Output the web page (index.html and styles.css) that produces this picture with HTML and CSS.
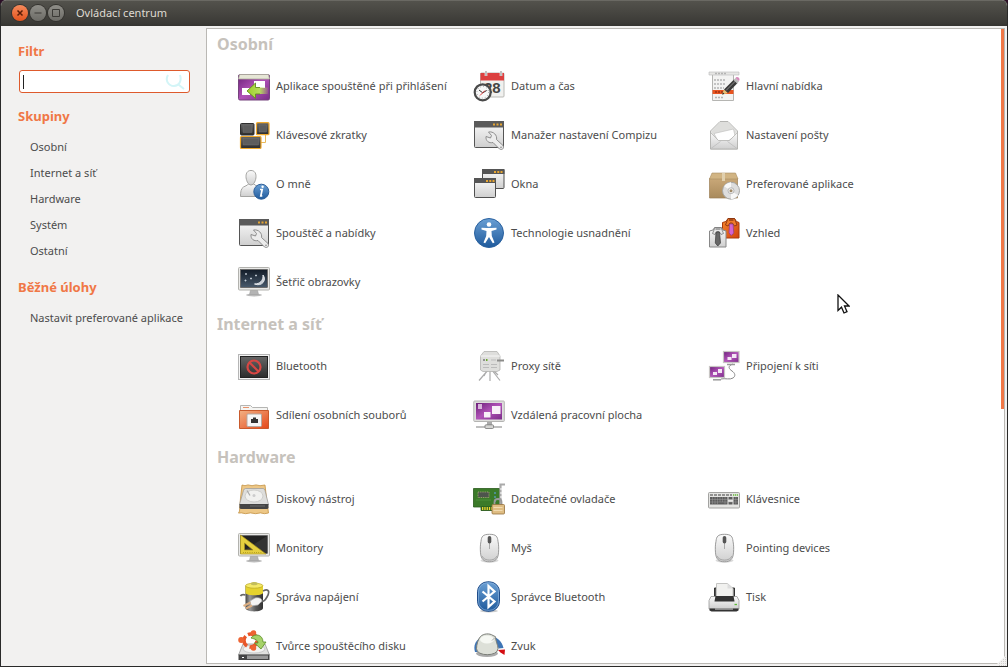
FILE: index.html
```html
<!DOCTYPE html>
<html lang="cs">
<head>
<meta charset="utf-8">
<meta name="viewport" content="width=device-width, initial-scale=1">
<title>Ovládací centrum</title>
<link rel="stylesheet" href="styles.css">
</head>
<body>
<svg class="defs" width="0" height="0" aria-hidden="true">
  <defs>
    <linearGradient id="purple" x1="0" y1="0" x2="1" y2="1"><stop offset="0" stop-color="#6b1f78"/><stop offset=".5" stop-color="#b153b8"/><stop offset="1" stop-color="#7a2c88"/></linearGradient>
    <linearGradient id="silver" x1="0" y1="0" x2="0" y2="1"><stop offset="0" stop-color="#fafafa"/><stop offset="1" stop-color="#cfcfcf"/></linearGradient>
    <linearGradient id="dark" x1="0" y1="0" x2="0" y2="1"><stop offset="0" stop-color="#666"/><stop offset="1" stop-color="#2c2c2c"/></linearGradient>
    <linearGradient id="blue" x1="0" y1="0" x2="0" y2="1"><stop offset="0" stop-color="#6a9fd4"/><stop offset="1" stop-color="#1f5a9c"/></linearGradient>
    <linearGradient id="orange" x1="0" y1="0" x2="1" y2="1"><stop offset="0" stop-color="#f2b184"/><stop offset="1" stop-color="#e5481a"/></linearGradient>
    <linearGradient id="shirt" x1="0" y1="0" x2="1" y2="1"><stop offset="0" stop-color="#f58a2e"/><stop offset="1" stop-color="#d2400e"/></linearGradient>
    <linearGradient id="green" x1="0" y1="0" x2="1" y2="0"><stop offset="0" stop-color="#9fce2c"/><stop offset=".6" stop-color="#b6dc5a"/><stop offset="1" stop-color="#b6dc5a" stop-opacity=".15"/></linearGradient>
    <linearGradient id="night" x1="0" y1="0" x2="0" y2="1"><stop offset="0" stop-color="#131d29"/><stop offset="1" stop-color="#47586a"/></linearGradient>
    <linearGradient id="tan" x1="0" y1="0" x2="0" y2="1"><stop offset="0" stop-color="#c9a878"/><stop offset="1" stop-color="#a98a5c"/></linearGradient>
    <linearGradient id="battery" x1="0" y1="0" x2="1" y2="0"><stop offset="0" stop-color="#444"/><stop offset=".25" stop-color="#999"/><stop offset=".6" stop-color="#555"/><stop offset="1" stop-color="#333"/></linearGradient>
  </defs>
  <symbol id="tool-window" viewBox="0 0 32 32">
    <rect x="1.500" y="2.500" width="29" height="26" rx="1" fill="url(#silver)" stroke="#555"/>
    <path d="M1 2h30v6.500H1z" fill="#5a5a5a"/>
    <path d="M20 4.500h2v2h-2zM23.500 4.500h2v2h-2zM27 4.500h2v2h-2z" fill="#e6a532"/>
    <path d="M15.500 13l3 3.500-1 2.500-4.500-1.500c-.500 4.500 3 7 7 6l6.500 6.500c2.500 1.500 5-.500 3.500-3.500l-6.500-6c1-4-3-8.500-8-7.500z" fill="#ececec" stroke="#858585" stroke-width=".9"/>
    <circle cx="28" cy="28.300" r=".9" fill="#999"/>
  </symbol>
  <symbol id="monitor" viewBox="0 0 32 32">
    <ellipse cx="16" cy="29" rx="8" ry="1.500" fill="#bbb"/>
    <path d="M12.500 24h7l1 4.500h-9z" fill="#b4b4b4" stroke="#999" stroke-width=".5"/>
    <rect x=".5" y="1.500" width="31" height="22.500" rx="1" fill="#e9e9e7" stroke="#b2b2ae"/>
    <rect x="2.500" y="3.500" width="27" height="18" fill="#222" stroke="#555" stroke-width=".5"/>
  </symbol>
  <symbol id="mouse" viewBox="0 0 32 32">
    <ellipse cx="16.500" cy="28.500" rx="9" ry="2" fill="#d9d9d9"/>
    <path d="M16.500 2.300c7 0 8 2.500 8.500 7 .8 4 .8 7 .5 11.500-.5 6-3 9-9 9s-8.500-3-9-9c-.3-4.500-.3-7.500.5-11.500.5-4.500 1.500-7 8.500-7z" fill="url(#silver)" stroke="#9b9b9b"/>
    <path d="M9 24c2 5.500 13 5.500 15 0" fill="none" stroke="#999" stroke-width=".8"/>
    <path d="M16.500 11v6" stroke="#aaa"/>
    <rect x="14.700" y="4" width="3.600" height="7.500" rx="1.800" fill="#555"/>
  </symbol>
</svg>

<div class="window">
  <header class="titlebar">
    <div class="controls">
      <button class="control control-close" type="button" aria-label="Zavřít"><svg viewBox="0 0 16 16"><path d="M5.500 5.500l5 5M10.500 5.500l-5 5"/></svg></button>
      <button class="control" type="button" aria-label="Minimalizovat"><svg viewBox="0 0 16 16"><path d="M4.500 8h7"/></svg></button>
      <button class="control" type="button" aria-label="Maximalizovat"><svg viewBox="0 0 16 16"><path d="M4.500 4.500h7v7h-7z"/></svg></button>
    </div>
    <h1 class="title">Ovládací centrum</h1>
  </header>

  <div class="body">
    <aside class="sidebar">
      <section class="side-section">
        <h2 class="side-heading"><label for="filter">Filtr</label></h2>
        <div class="search">
          <span class="caret"></span>
          <input class="search-input" id="filter" type="text" autocomplete="off">
          <svg class="search-icon" viewBox="0 0 20 16" aria-hidden="true"><path d="M3 1C0 6 3 12 9 12c5 0 8-5 6-11M14 11l5 4" fill="none" stroke="#d3f5f7" stroke-width="2"/></svg>
        </div>
      </section>
      <nav class="side-section">
        <h2 class="side-heading">Skupiny</h2>
        <ul class="side-list">
          <li><a href="#personal">Osobní</a></li>
          <li><a href="#internet">Internet a síť</a></li>
          <li><a href="#hardware">Hardware</a></li>
          <li><a href="#system">Systém</a></li>
          <li><a href="#other">Ostatní</a></li>
        </ul>
      </nav>
      <nav class="side-section">
        <h2 class="side-heading">Běžné úlohy</h2>
        <ul class="side-list">
          <li><a href="#preferred">Nastavit preferované aplikace</a></li>
        </ul>
      </nav>
    </aside>

    <main class="panel">
      <div class="content">
        <section class="group" id="personal">
          <h2 class="group-heading">Osobní</h2>
          <ul class="items">
            <li><a class="item" href="#startup"><svg class="icon" viewBox="0 0 32 32">
              <rect x=".5" y="4.500" width="31" height="25.500" rx="1.500" fill="url(#purple)" stroke="#75437d"/>
              <path d="M1.500 4.500h29l1 4.500H.500z" fill="#e6e6d6" stroke="#aaa89a" stroke-width=".8"/>
              <path d="M16 11h11v7H16zM4 18h8v7H4z" fill="#fff"/>
              <path d="M9 21l8.500-8v4.500H30v6.500H17.500v4.500z" fill="url(#green)"/><path d="M22 17.500h-4.500V13L9 21l8.500 7.500V24H22" fill="none" stroke="#628a1c" stroke-width=".9"/>
            </svg><span>Aplikace spouštěné při přihlášení</span></a></li>
            <li><a class="item" href="#datetime"><svg class="icon" viewBox="0 0 32 32">
              <rect x="7.500" y="3" width="23.500" height="24" rx="1" fill="#f1f1ef" stroke="#b9b9b5"/>
              <path d="M7.500 3h23.500v7.500H7.500z" fill="#dc4040"/>
              <path d="M13 1v5M28 1v5" stroke="#fff" stroke-width="2.600"/><path d="M13 1v5M28 1v5" stroke="#999" stroke-width="1.200"/>
              <text x="11" y="23" class="icon-date">28</text>
              <circle cx="9.700" cy="22.300" r="8" fill="#f8f8f8" stroke="#4a4a4a" stroke-width="2.200"/>
              <circle cx="9.700" cy="22.300" r="5.800" fill="none" stroke="#777" stroke-width="1" stroke-dasharray=".6 2.440"/>
              <path d="M6 20l3.700 2.800 4-2.300" fill="none" stroke="#333" stroke-width="1"/><path d="M7 25.500l5-5" stroke="#d22" stroke-width=".9"/>
            </svg><span>Datum a čas</span></a></li>
            <li><a class="item" href="#menu"><svg class="icon" viewBox="0 0 32 32">
              <path d="M4.500 4h21v26.500h-21z" fill="#f3f3f2" stroke="#b5b5b2"/>
              <path d="M1 2h30v3H1z" fill="#e6e6e4" stroke="#bbb" stroke-width=".6"/>
              <path d="M7 3.500h11M6 10h12M6 14h12M6 18h10M7 27.500h9" stroke="#b4b4b4" stroke-width="1.500" stroke-dasharray="2 1"/>
              <path d="M4.500 20h21v4h-21z" fill="#e95420"/><path d="M7 22h9" stroke="#9b3213" stroke-width="1.500" stroke-dasharray="2 1"/>
              <path d="M14 24.500l2-5 4 3.500z" fill="#e5c478"/><path d="M14 24.500l1-2 1.500 1.400z" fill="#222"/>
              <path d="M16 19.500L26 9.500l3.500 3.500L20 23z" fill="#3a3a3a"/><path d="M18 20.500l9.500-9.500" stroke="#8a8a8a"/>
              <path d="M25.500 10l2-2 3.500 3.500-2 2z" fill="#bbb"/><path d="M27.500 8c1-2 4.500-.5 4 2.200L30.500 11z" fill="#d58aba"/>
            </svg><span>Hlavní nabídka</span></a></li>
            <li><a class="item" href="#shortcuts"><svg class="icon" viewBox="0 0 32 32">
              <rect x="2.500" y="4.500" width="13.500" height="11.500" rx="1" fill="url(#dark)" stroke="#2f2f2f"/><rect x="5" y="6" width="9" height="7.500" fill="#5d5d5d" stroke="#777" stroke-width=".4"/>
              <path d="M27.500 16v7.500H23" fill="none" stroke="#e8b95c" stroke-width="1"/>
              <rect x="18.500" y="3.700" width="12.500" height="12" rx="1" fill="url(#dark)" stroke="#f0a92c" stroke-width="1.200"/><rect x="21" y="6" width="7.500" height="7" fill="#5d5d5d" stroke="#777" stroke-width=".4"/>
              <rect x="2.500" y="17.500" width="20.500" height="12" rx="1" fill="url(#dark)" stroke="#f0a92c" stroke-width="1.200"/><rect x="5" y="19.500" width="15.500" height="6.500" fill="#5d5d5d" stroke="#777" stroke-width=".4"/>
            </svg><span>Klávesové zkratky</span></a></li>
            <li><a class="item" href="#compiz"><svg class="icon"><use href="#tool-window"/></svg><span>Manažer nastavení Compizu</span></a></li>
            <li><a class="item" href="#mail"><svg class="icon" viewBox="0 0 32 32">
              <path d="M2.500 12L12 2.500h8L29.500 12v18h-27z" fill="#ececea" stroke="#b4b4b2"/>
              <path d="M3 13L12 3h8l9 10-7 8H10z" fill="#dededc"/>
              <path d="M6 14.500L25.500 10l1.500 7-7 5H10z" fill="#fff" stroke="#c2c2c0" stroke-width=".7"/>
              <path d="M2.500 13.500l8 8h11l8-8V30h-27z" fill="url(#silver)" stroke="#adadab" stroke-width=".7"/>
              <path d="M3 29.500l9.500-7M29 29.500l-9.500-7" stroke="#bbb" stroke-width=".8"/>
            </svg><span>Nastavení pošty</span></a></li>
            <li><a class="item" href="#about"><svg class="icon" viewBox="0 0 32 32">
              <path d="M10.500 16l-1 1-4 2C3 20.500 2.500 24 2.500 28.500h18V19l-3.500-2-1-1z" fill="url(#silver)" stroke="#a4a4a2"/>
              <path d="M13 2.500c3.500 0 5 2.500 5 6s-2 8.500-5 8.500-5-5-5-8.500 1.500-6 5-6z" fill="url(#silver)" stroke="#a4a4a2"/>
              <circle cx="23.300" cy="23.700" r="7.500" fill="url(#blue)" stroke="#2d5f99"/>
              <path d="M22 21.500h2.200l-1.400 6.500h1.500" fill="none" stroke="#fff" stroke-width="1.700"/><circle cx="24.600" cy="18.700" r="1.200" fill="#fff"/>
            </svg><span>O mně</span></a></li>
            <li><a class="item" href="#windows"><svg class="icon" viewBox="0 0 32 32">
              <rect x="9.500" y="1.500" width="21.500" height="19" rx="1" fill="url(#silver)" stroke="#4f4f4f"/><path d="M9 1h22.500v5H9z" fill="#555"/><path d="M21 3h2v2h-2zM24.300 3h2v2h-2zM27.500 3h2v2h-2z" fill="#e6a532"/>
              <rect x="1.500" y="10.500" width="21" height="19" rx="1" fill="url(#silver)" stroke="#4f4f4f"/><path d="M1 10h22v5H1z" fill="#555"/><path d="M13 12h2v2h-2zM16.300 12h2v2h-2zM19.500 12h2v2h-2z" fill="#e6a532"/>
            </svg><span>Okna</span></a></li>
            <li><a class="item" href="#preferred"><svg class="icon" viewBox="0 0 32 32">
              <path d="M1.500 10.500h28v19.500h-28z" fill="url(#tan)" stroke="#9c8058" stroke-width=".7"/>
              <path d="M4 5h23.500l2.500 6H1.500z" fill="#d1b483" stroke="#a88d61" stroke-width=".6"/>
              <path d="M14 5h3v8h-3z" fill="#e0cfad"/>
              <circle cx="23" cy="22.700" r="8.500" fill="#ddd" stroke="#a6a6a4"/><path d="M23 22.700l-7-4.500c2-3 6-4 7-4zM23 22.700l7 4.500c-2 3-6 4-7 4z" fill="#f8f8f8"/>
              <circle cx="23" cy="22.700" r="3" fill="#eee" stroke="#999" stroke-width=".6"/><circle cx="23" cy="22.700" r="1.500" fill="#a08a68"/>
            </svg><span>Preferované aplikace</span></a></li>
            <li><a class="item" href="#panel"><svg class="icon"><use href="#tool-window"/></svg><span>Spouštěč a nabídky</span></a></li>
            <li><a class="item" href="#access"><svg class="icon" viewBox="0 0 32 32">
              <circle cx="16" cy="16" r="14.500" fill="url(#blue)" stroke="#2a619f"/>
              <circle cx="16" cy="7.500" r="2.300" fill="#fff"/>
              <path d="M8.500 10.800l5.500.2h4l5.500-.2v1.700l-5 1.600.3 5 2.700 6.500-1.700.7L16 20l-3.800 6.300-1.700-.7 2.700-6.500.3-5-5-1.600z" fill="#fff"/>
            </svg><span>Technologie usnadnění</span></a></li>
            <li><a class="item" href="#appearance"><svg class="icon" viewBox="0 0 32 32">
              <path d="M14.500 5.500l3.500-1 2-3h6.500l2 3 2.500 1v15.500H14.500z" fill="url(#shirt)" stroke="#a83a0d"/><path d="M17.500 8l2.500-6.500h6.500L29 8l-2.500 1-2.200-3h-2.300l-2 3z" fill="#ef7a2a" stroke="#7e2e0d" stroke-width=".8"/><path d="M21 3h4.500" stroke="#7e2e0d" stroke-width="1.200"/>
              <path d="M21.500 7h3.500l.8 9-2.500 2.500L21 16z" fill="#d463cf" stroke="#8c3c8c" stroke-width=".7"/>
              <path d="M1.500 14l3.500-1 1.500-2.500h7l1.500 2.500 3 1v16H1.500z" fill="url(#silver)" stroke="#888"/><path d="M4.500 16.500L7 10.500h6l2.500 6-2.500 1-2-3H9l-2 3z" fill="#e6e6e6" stroke="#777" stroke-width=".8"/><path d="M7.500 12h5" stroke="#666"/>
              <path d="M8 15h3.500l1 11-2.700 3-2.500-3z" fill="#666" stroke="#3a3a3a" stroke-width=".7"/>
            </svg><span>Vzhled</span></a></li>
            <li><a class="item" href="#screensaver"><svg class="icon" viewBox="0 0 32 32">
              <use href="#monitor"/><rect x="3" y="4" width="26" height="17" fill="url(#night)"/>
              <path d="M25 9c4 5-1 12-8.500 9 5.500 0 9-3.500 8.500-9z" fill="#c9cfd6" stroke="#dfe3e8"/>
              <path d="M8 7v2M7 8h2M18 8.500v2M17 9.500h2M13 11.500v2M12 12.500h2M7.500 13.500v2M6.500 14.500h2" stroke="#cdd5de" stroke-width=".8"/>
            </svg><span>Šetřič obrazovky</span></a></li>
          </ul>
        </section>

        <section class="group" id="internet">
          <h2 class="group-heading">Internet a síť</h2>
          <ul class="items">
            <li><a class="item" href="#bluetooth"><svg class="icon" viewBox="0 0 32 32">
              <rect x=".5" y="4.500" width="31" height="25" fill="#f4f4f4" stroke="#b5b5b5"/>
              <rect x="2.500" y="6.500" width="27" height="21" fill="url(#dark)" stroke="#222"/>
              <circle cx="16" cy="17" r="6.500" fill="none" stroke="#d84643" stroke-width="2.200"/><path d="M11.500 12.500l9 9" stroke="#d84643" stroke-width="2.200"/>
            </svg><span>Bluetooth</span></a></li>
            <li><a class="item" href="#proxy"><svg class="icon" viewBox="0 0 32 32">
              <path d="M16 19L6 30.500M17 19v12M18 19l9 11.500M14 20l-3 6M20 20l5 5" stroke="#aaa" stroke-width="1.200"/>
              <path d="M7.500 6L11 1.500h13L27 6v14l-3 1.500H10L7.500 20z" fill="#dededc" stroke="#b2b2b0" stroke-width=".8"/><path d="M7.500 6H27" stroke="#f7f7f7"/>
              <path d="M10 10h2" stroke="#777" stroke-width="1.500"/><path d="M13 10h1.500" stroke="#6aaa2c" stroke-width="2"/><path d="M18 10h5M10 14.500h6M18 14.500h6M10 17.500h6M18 17.500h6" stroke="#bbb" stroke-width="1"/>
              <path d="M24 10.500h7" stroke="#8c8c8a" stroke-width="2"/>
            </svg><span>Proxy sítě</span></a></li>
            <li><a class="item" href="#network"><svg class="icon" viewBox="0 0 32 32">
              <path d="M25 14c-6 2-4 5-1 7s4 5 1 7-8 0-12 1" fill="none" stroke="#888" stroke-width="1"/>
              <rect x="15.500" y="1.500" width="15.500" height="11" fill="url(#purple)" stroke="#c8c6c4" stroke-width="1.200"/><path d="M19.500 7h4v3h-4zM24 4h4.500v4H24z" fill="#f3e6f4"/><path d="M19 14.500h8" stroke="#999" stroke-width="1.500"/>
              <rect x="1.500" y="16.500" width="15" height="11" fill="url(#purple)" stroke="#c8c6c4" stroke-width="1.200"/><path d="M5 22h4v3H5zM10 19h4v4h-4z" fill="#f3e6f4"/><path d="M5 29.800h8" stroke="#999" stroke-width="1.500"/>
            </svg><span>Připojení k síti</span></a></li>
            <li><a class="item" href="#sharing"><svg class="icon" viewBox="0 0 32 32">
              <path d="M2.500 12V6.500h10l2 2h15v5z" fill="#f5f5f3" stroke="#b5b5b3"/><path d="M5 8.500h6" stroke="#e7936c"/>
              <path d="M1.500 11.500h29v18h-29z" fill="url(#orange)" stroke="#c95a2c"/>
              <rect x="9" y="15" width="14.500" height="12.500" rx="1" fill="#f6f6f6" stroke="#b5a9a2"/>
              <path d="M13 24v-4h2v-1.500h3V20h2v4z" fill="#333"/>
            </svg><span>Sdílení osobních souborů</span></a></li>
            <li><a class="item" href="#remote"><svg class="icon" viewBox="0 0 32 32">
              <path d="M3 28h26" stroke="#aaa" stroke-width="1.500"/><path d="M14 23h5v3h-5z" fill="#aaa"/><rect x="12" y="25.800" width="8.500" height="3.700" rx="1" fill="#d4d4d2" stroke="#777" stroke-width=".8"/>
              <rect x=".8" y="2" width="30.500" height="20.500" rx=".8" fill="#dededc" stroke="#b4b4b2"/><rect x="3" y="4" width="26" height="16.500" fill="url(#purple)"/>
              <path d="M5 5h4v5H5z" fill="#e5cbe8" fill-opacity=".85"/><path d="M19 7h8.500v8H19zM11 13h6.500v5.500H11z" fill="#f8f0f8"/>
            </svg><span>Vzdálená pracovní plocha</span></a></li>
          </ul>
        </section>

        <section class="group" id="hardware">
          <h2 class="group-heading">Hardware</h2>
          <ul class="items">
            <li><a class="item" href="#disks"><svg class="icon" viewBox="0 0 32 32">
              <path d="M4 2l3 .7 3-.8 4 .8 4-.8 4 .8 5-.7 1.500 13 2 15-4 .7-4-.8-5 .8-5-.8-5 .8-4-.8-3 .2 1-2 1-13z" fill="#edc786" stroke="#c49242" stroke-width=".8"/>
              <path d="M7.500 5.500h17.500q1.500 0 2 2l3.500 14H1.500l4-14q.5-2 2-2z" fill="#dededc" stroke="#999" stroke-width=".7"/><ellipse cx="16" cy="13" rx="9" ry="6" fill="#f1f1ef" stroke="#c6c6c4" stroke-width=".8"/><path d="M9 7.500l3 5" stroke="#aaa" stroke-width="1.200"/><circle cx="16" cy="12.500" r="1.500" fill="#ccc"/>
              <path d="M1.500 21h29v3.500q0 1.500-2 1.500h-25q-2 0-2-1.500z" fill="#444"/><path d="M12 23h15" stroke="#777" stroke-width=".8"/>
            </svg><span>Diskový nástroj</span></a></li>
            <li><a class="item" href="#drivers"><svg class="icon" viewBox="0 0 32 32">
              <path d="M.5 5.500h26V24H8v3.500h11V24H.5z" fill="#3b7a29" stroke="#2a5a1c" stroke-width=".8"/><path d="M8 24.500h11v3H8z" fill="#335f1e"/><path d="M9 25.500h10" stroke="#e8d732" stroke-width="3" stroke-dasharray="1.300 1"/>
              <rect x="5" y="9" width="11" height="5.500" fill="#4d544c" stroke="#a8a878" stroke-width=".9" stroke-dasharray="1 .8"/><path d="M22 9v11" stroke="#5b9fd2" stroke-width="1.200" stroke-dasharray="2 2"/><path d="M3 17h15" stroke="#4f8f3a" stroke-width="1"/>
              <path d="M27.500 22V1.500H32" fill="none" stroke="#aaa" stroke-width="2.200"/><path d="M28 5v13" stroke="#fff" stroke-dasharray="2 2"/>
              <path d="M21.500 22v-3c0-4 7-4 7 0v3" fill="none" stroke="#999" stroke-width="1.800"/><rect x="19" y="21.500" width="12.500" height="9.500" rx="1" fill="#dfbd83" stroke="#94713d" stroke-width=".8"/><path d="M20.500 24.500h9M20.500 27.500h9" stroke="#f4dfb5" stroke-width=".9"/>
            </svg><span>Dodatečné ovladače</span></a></li>
            <li><a class="item" href="#keyboard"><svg class="icon" viewBox="0 0 32 32">
              <rect x=".5" y="9.500" width="31" height="15.500" rx="1" fill="#e4e4e2" stroke="#a3a3a1"/>
              <path d="M2 12h22" stroke="#777" stroke-width="1.300" stroke-dasharray="3 1"/><path d="M25 12h5" stroke="#63bb37" stroke-width="1.300" stroke-dasharray="1.200 .7"/>
              <path d="M2 14h17.500v7.500H2zM20.500 14h4v2.500h-4zM20.500 19h4v2.500h-4zM25.500 14h4.500v7.500h-4.500z" fill="#5c5c5c"/><path d="M2 16.500h28M2 19h28M4.500 14v7.500M7 14v7.500M9.500 14v7.500M12 14v5M14.500 14v5M17 14v7.500M27.800 14v7.500" stroke="#aaa" stroke-width=".4"/>
            </svg><span>Klávesnice</span></a></li>
            <li><a class="item" href="#monitors"><svg class="icon" viewBox="0 0 32 32">
              <use href="#monitor"/><path d="M3 20.500L29 4v17z" fill="#333"/>
              <path d="M2.500 3v19H28zM6.500 11l8.500 7H6.500z" fill="#e6cf3f" fill-rule="evenodd" stroke="#a99420" stroke-width=".7"/><path d="M5 20.500h19" stroke="#a28e1c" stroke-width="1" stroke-dasharray=".7 1.500"/>
            </svg><span>Monitory</span></a></li>
            <li><a class="item" href="#mouse-settings"><svg class="icon"><use href="#mouse"/></svg><span>Myš</span></a></li>
            <li><a class="item" href="#pointing"><svg class="icon"><use href="#mouse"/></svg><span>Pointing devices</span></a></li>
            <li><a class="item" href="#power"><svg class="icon" viewBox="0 0 32 32">
              <path d="M7.500 5v22c0 4.500 17.500 4.500 17.500 0V5z" fill="url(#battery)"/>
              <path d="M7.500 4.500v7.500c1 3 16.500 3 17.500 0V4.500z" fill="#e5d22e"/><ellipse cx="16.200" cy="4.700" rx="8.700" ry="2.500" fill="#f4e968" stroke="#b8a51d" stroke-width=".7"/><path d="M13 3.500V2c1-1.300 5.500-1.300 6.500 0v1.500c-1 1-5.500 1-6.500 0z" fill="#c3bd5a"/>
              <path d="M2.500 15c1-2 3-1.500 5-1M25 10c6-3 7 1 4 6-2 3.500-3 4.500-7 5" fill="none" stroke="#666" stroke-width="1.700"/>
              <path d="M12 20l5-3c3-1 7 0 7 3l-4 4-7 1z" fill="#f3f3f3" stroke="#aaa" stroke-width=".7"/><path d="M12.500 21.500l-7 3.500M14 24.500l-6 3" stroke="#dcae82" stroke-width="2"/>
            </svg><span>Správa napájení</span></a></li>
            <li><a class="item" href="#bt-manager"><svg class="icon" viewBox="0 0 32 32">
              <ellipse cx="16" cy="30" rx="9" ry="1.500" fill="#ccc"/><rect x="4.500" y=".8" width="22" height="29.500" rx="10" fill="url(#blue)" stroke="#204d8a"/><rect x="5.500" y="1.800" width="20" height="27.500" rx="9" fill="none" stroke="#8ab1dc" stroke-width=".7"/>
              <path d="M9.500 10.500l12 10L15.500 26V5l6 5.500-12 10" fill="none" stroke="#fff" stroke-width="2.200"/>
            </svg><span>Správce Bluetooth</span></a></li>
            <li><a class="item" href="#print"><svg class="icon" viewBox="0 0 32 32">
              <path d="M6.500 16V7h20v9z" fill="#555" stroke="#333"/><path d="M8.500 17V2.500h11l5.500 5V17z" fill="#f1f1ef" stroke="#c4c4c2"/><path d="M19.500 2.500v5H25" fill="#ddd"/>
              <path d="M3 15.500h26l2 4V28H1v-8.500z" fill="url(#silver)" stroke="#999" stroke-width=".8"/><path d="M7.500 15h18l1 5.500h-20z" fill="#333"/>
              <path d="M1.500 27.500h29v2l-2 1h-25l-2-1z" fill="#333"/><path d="M7 28h18" stroke="#aaa" stroke-width="1.500"/><path d="M26.500 23.500h2.500" stroke="#5ebb3a" stroke-width="1.300"/>
            </svg><span>Tisk</span></a></li>
            <li><a class="item" href="#usb-creator"><svg class="icon" viewBox="0 0 32 32">
              <path d="M5 14h22l4.500 11H.500z" fill="#e1e1df" stroke="#999" stroke-width=".8"/><ellipse cx="16" cy="19" rx="11" ry="4" fill="#f3f3f1" stroke="#bbb" stroke-width=".7"/>
              <path d="M.5 24.500h31V30H.500z" fill="#444"/><path d="M9 25.500h21v3.500H9z" fill="#999"/><path d="M4 27.500h2" stroke="#fff"/>
              <circle cx="12.500" cy="10.500" r="6.500" fill="none" stroke="#e8572a" stroke-width="3.500" stroke-dasharray="11 2.600"/><circle cx="15.500" cy="3" r="2.800" fill="#ee6433"/><circle cx="3.200" cy="10" r="3" fill="#ee6433"/><circle cx="15.500" cy="18" r="2.800" fill="#ee6433"/>
              <path d="M13 8c3-5 12-4 12 4h3l-5 7-6.500-6h3.500c0-3-3-4-7-5z" fill="#a6d269" stroke="#598d26" stroke-width=".8"/>
            </svg><span>Tvůrce spouštěcího disku</span></a></li>
            <li><a class="item" href="#sound"><svg class="icon" viewBox="0 0 32 32">
              <path d="M2 22C-1 12 7 6 15 6c9 0 14 5 15.500 12l-5 .5c-1-5-4-8-10-8-7 0-11 5-10 11.500z" fill="#3f75b5"/>
              <path d="M25 20l7-.5-.5 5.500-4-2.500z" fill="#d40d12"/><ellipse cx="14" cy="23.500" rx="11" ry="3.500" fill="#aaa"/>
              <path d="M7.500 6.500c3-3 9-3.500 12.500-1l2.500 1.200c0 4.500 2.500 8 2.500 12 0 8-21.500 8-21.500 0C3.500 15 5 9 7.500 6.500z" fill="#dde0d8" stroke="#7a7d77" stroke-width="1"/><ellipse cx="14" cy="9.500" rx="7" ry="4" fill="#f6f8f3"/><path d="M22 7.500l-3 3" stroke="#aaa"/>
            </svg><span>Zvuk</span></a></li>
          </ul>
        </section>
      </div>
      <div class="scroll-track"><div class="scroll-thumb"></div></div>
    </main>
    <svg class="grip" viewBox="0 0 12 12" aria-hidden="true"><path d="M12 0v12H0z" fill="#f2f1f0"/><path d="M10.500 3v9M8.500 5v7M6.500 7v5M4.500 9v3" stroke="#d2d0ce" stroke-dasharray="1 1"/></svg>
  </div>
</div>
<svg class="pointer" viewBox="0 0 13 21" aria-hidden="true"><path d="M1 1v15.500l3.500-3.300L7 19l3-1.300L7.500 12H12z" fill="#fff" stroke="#111" stroke-width="1.300"/></svg>
</body>
</html>
```
FILE: styles.css
```css
* {
  box-sizing: border-box;
}

body {
  margin: 0;
  background: #2c0f26;
  color: #4c4c4c;
  font: 11px/16px "Noto Sans", "Open Sans", sans-serif;
}

h1,
h2,
ul {
  margin: 0;
  padding: 0;
}

ul {
  list-style: none;
}

a {
  color: inherit;
  text-decoration: none;
}

.defs {
  position: absolute;
}

.window {
  display: flex;
  flex-direction: column;
  height: 100vh;
  overflow: hidden;
  border: solid #2a2a29;
  border-width: 0 1px 1px;
  border-radius: 6px 6px 0 0;
  background: #f2f1f0;
}

.titlebar {
  display: flex;
  flex: none;
  align-items: center;
  gap: 12px;
  height: 26px;
  padding: 0 11px 1px;
  border-top: 1px solid #6a6963;
  background: linear-gradient(#53524c, #3c3b37 85%, #353430);
}

.controls {
  display: flex;
  gap: 2px;
}

.control {
  width: 16px;
  height: 16px;
  padding: 0;
  border: 0;
  border-radius: 50%;
  background: linear-gradient(#8f8e88, #6c6b66);
  box-shadow: 0 0 0 1px #34332f;
}

.control svg {
  display: block;
  fill: none;
  stroke: #3c3b37;
  stroke-width: 1;
}

.control-close {
  background: linear-gradient(#f58a5b, #e2531e);
}

.control-close svg {
  stroke: #5a1d08;
  stroke-width: 1.5;
}

.title {
  color: #dfdbd2;
  font-size: 11px;
  font-weight: 400;
}

.body {
  position: relative;
  display: flex;
  flex: 1;
  min-height: 0;
  padding: 2px 2px 2px 0;
}

.sidebar {
  display: flex;
  flex: none;
  flex-direction: column;
  gap: 13px;
  width: 205px;
  padding: 13px 16px 0 17px;
}

.side-heading {
  color: #f07746;
  font-size: 13px;
  font-weight: 700;
  line-height: 20px;
}

.search {
  display: flex;
  align-items: center;
  height: 23px;
  margin: 9px 0 0 1px;
  padding: 0 4px 0 3px;
  border: 1px solid #de5a2c;
  border-radius: 3px;
  background: #fff;
}

.caret {
  width: 1px;
  height: 14px;
  background: #222;
}

.search-input {
  flex: 1;
  min-width: 0;
  height: 16px;
  padding: 0;
  border: 0;
  outline: 0;
  background: none;
  color: #333;
  font: inherit;
}

.search-icon {
  width: 20px;
  height: 16px;
}

.side-list {
  padding: 8px 0 0 12px;
  line-height: 26px;
  white-space: nowrap;
}

.panel {
  display: flex;
  flex: 1;
  min-width: 0;
  border: 1px solid #bab8b4;
  background: #fff;
}

.content {
  display: flex;
  flex: 1;
  flex-direction: column;
  gap: 8px;
  min-width: 0;
  padding: 5px 0 0 10px;
  overflow: hidden;
}

.group-heading {
  margin-bottom: 7px;
  color: #c6c2bc;
  font-size: 16px;
  font-weight: 700;
  line-height: 20px;
}

.items {
  display: grid;
  grid-template-columns: repeat(auto-fill, 235px);
  padding-left: 21px;
}

.item {
  display: flex;
  align-items: center;
  gap: 6px;
  height: 49px;
  white-space: nowrap;
}

.icon {
  flex: none;
  width: 32px;
  height: 32px;
}

.icon-date {
  fill: #444;
  font: 700 15px "Liberation Sans", sans-serif;
}

.scroll-track {
  flex: none;
  width: 3px;
}

.scroll-thumb {
  height: 60%;
  background: #f07746;
}

.grip {
  position: absolute;
  right: 0;
  bottom: 0;
  width: 12px;
  height: 12px;
}

.pointer {
  position: absolute;
  top: 294px;
  left: 837px;
  width: 13px;
  height: 21px;
}
```
